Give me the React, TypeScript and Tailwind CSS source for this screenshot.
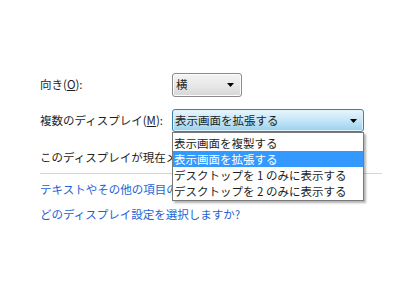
import React from 'react';

const Arrow = () => (
  <svg width="7" height="4" viewBox="0 0 7 4" className="shrink-0">
    <path d="M0 0 H7 L3.5 4 Z" fill="#000" />
  </svg>
);

const options = [
  '表示画面を複製する',
  '表示画面を拡張する',
  'デスクトップを 1 のみに表示する',
  'デスクトップを 2 のみに表示する',
];

export default function App() {
  return (
    <div
      className="w-[400px] h-[300px] bg-white pt-[73px] pl-[40px] pr-[18px] text-[11.5px] text-[#1e1e1e] overflow-hidden"
      style={{ fontFamily: '"Noto Sans CJK JP", "Noto Sans", sans-serif' }}
    >
      {/* Orientation */}
      <div className="flex items-center h-[24px]">
        <span className="w-[132px] shrink-0">
          向き(<span className="underline">O</span>):
        </span>
        <div className="w-[70px] h-[24px] flex items-center justify-between pl-[3px] pr-[7px] rounded-[3px] border border-[#8a8a8a] bg-gradient-to-b from-[#f3f3f3] via-[#e8e8e8] to-[#d6d6d6] shadow-[inset_0_0_0_1px_#fcfcfc]">
          <span>横</span>
          <Arrow />
        </div>
      </div>

      {/* Multiple displays */}
      <div className="flex items-center h-[23px] mt-[12px]">
        <span className="w-[132px] shrink-0">
          複数のディスプレイ(<span className="underline">M</span>):
        </span>
        <div className="relative z-10">
          <div className="w-[192px] h-[23px] flex items-center justify-between pl-[2px] pr-[6px] rounded-[3px] border border-[#3c7fb1] bg-gradient-to-b from-[#e8f5fd] via-[#c4e5f6] to-[#98d1ef] shadow-[inset_0_0_0_1px_#dff2fc]">
            <span>表示画面を拡張する</span>
            <Arrow />
          </div>
          <div className="absolute left-0 top-full w-[192px] border border-[#7a7a7a] bg-white pt-[2px] pb-px shadow-[2px_2px_2px_rgba(0,0,0,0.3)]">
            {options.map((o, i) => (
              <div
                key={o}
                className={`h-[16px] leading-[16px] pl-[1px] whitespace-nowrap ${
                  i === 1 ? 'bg-[#3399ff] text-white' : ''
                }`}
              >
                {o}
              </div>
            ))}
          </div>
        </div>
      </div>

      {/* text below is covered by the open list */}
      <div className="mt-[17px] w-[132px] h-[16px] leading-[16px] whitespace-nowrap overflow-hidden">
        このディスプレイが現在メインのディスプレイです
      </div>

      <div className="mt-[8px] h-px bg-[#d6d6d6]" />

      <div className="mt-[7px] w-[132px] h-[16px] leading-[16px] text-[#1d62d4] whitespace-nowrap overflow-hidden">
        テキストやその他の項目の大きさを変更します
      </div>
      <div className="mt-[9px] h-[16px] leading-[16px] text-[#1d62d4] whitespace-nowrap">
        どのディスプレイ設定を選択しますか?
      </div>
    </div>
  );
}
